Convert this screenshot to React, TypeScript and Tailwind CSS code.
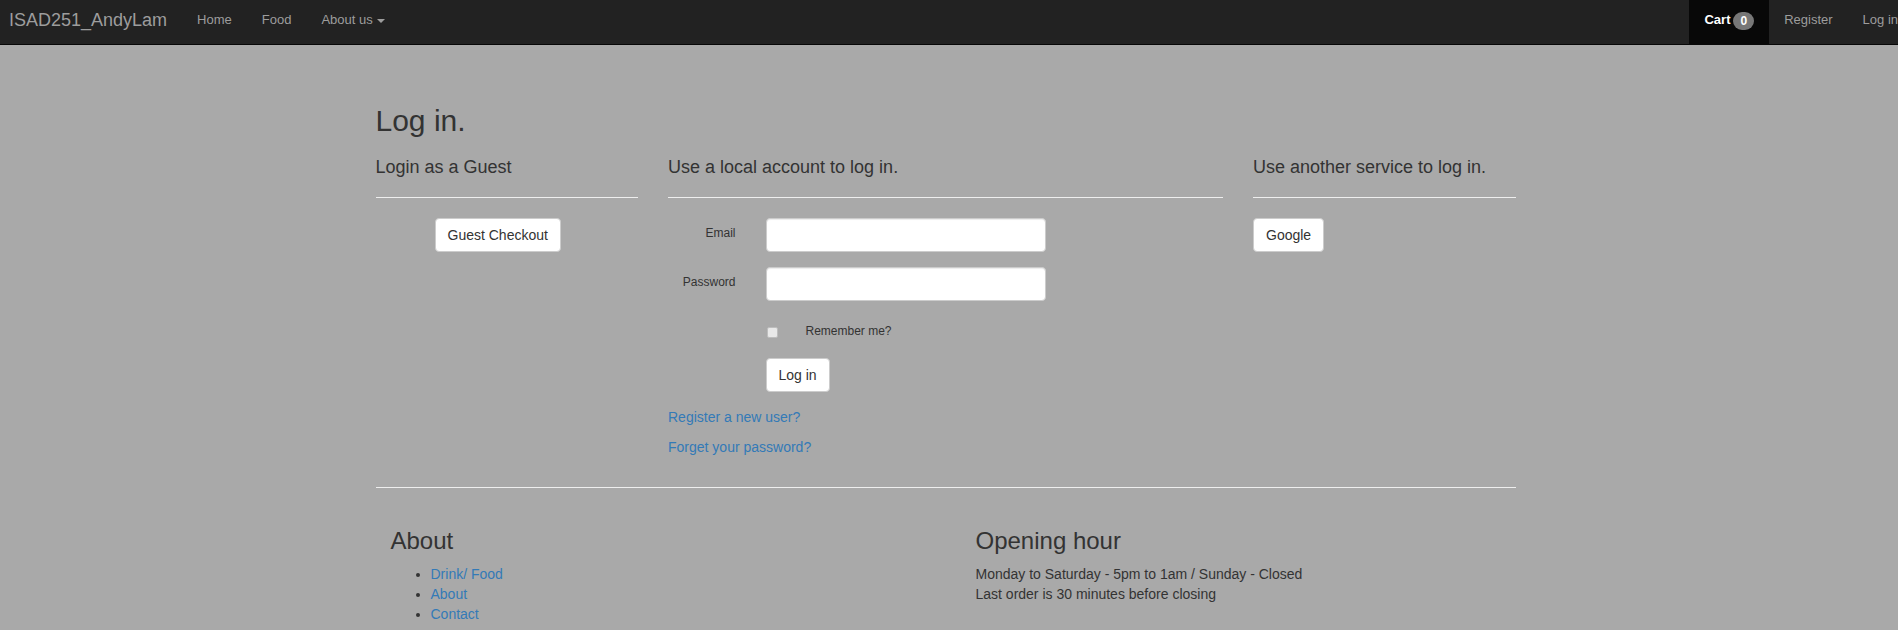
import React from 'react';

const navLinks = ['Home', 'Food'];
const aboutLinks = ['Drink/ Food', 'About', 'Contact'];

function Navbar() {
  return (
    <nav className="flex h-[45px] overflow-hidden border-b border-[#080808] bg-[#222]">
      <a className="pl-[9px] pr-[15px] pt-[10px] text-[18px] leading-[20px] text-[#9d9d9d]">ISAD251_AndyLam</a>
      <ul className="flex">
        {navLinks.map((l) => (
          <li key={l} className="px-[15px] pt-[10px] text-[13px] leading-[20px] text-[#9d9d9d]">
            {l}
          </li>
        ))}
        <li className="px-[15px] pt-[10px] text-[13px] leading-[20px] text-[#9d9d9d]">
          About us
          <span className="ml-[4px] inline-block h-0 w-0 border-x-[4px] border-t-[4px] border-x-transparent border-t-[#9d9d9d] align-middle" />
        </li>
      </ul>
      {/* navbar-right keeps bootstrap's -15px margin */}
      <ul className="-mr-[15px] ml-auto flex shrink-0">
        <li className="flex h-[44px] bg-[#080808] px-[15px] pt-[10px] text-[13px] leading-[20px] text-white">
          <span className="font-bold">Cart</span>
          <span className="ml-[3px] mt-[2px] h-[18px] rounded-[10px] bg-[#777] px-[7px] pt-[3px] text-[12px] font-bold leading-[12px] text-white">
            0
          </span>
        </li>
        <li className="px-[15px] pt-[10px] text-[13px] leading-[20px] text-[#9d9d9d]">Register</li>
        <li className="whitespace-nowrap px-[15px] pt-[10px] text-[13px] leading-[20px] text-[#9d9d9d]">Log in</li>
      </ul>
    </nav>
  );
}

function Button({ children }: { children: React.ReactNode }) {
  return (
    <button className="h-[34px] rounded-[4px] border border-[#ccc] bg-white px-[12px] text-[14px] leading-[20px] text-[#333]">
      {children}
    </button>
  );
}

function Input() {
  return (
    <div className="h-[34px] w-[280px] rounded-[4px] border border-[#ccc] bg-white shadow-[inset_0_1px_1px_rgba(0,0,0,0.075)]" />
  );
}

function SectionTitle({ children }: { children: React.ReactNode }) {
  return (
    <>
      <h4 className="mt-[10px] text-[18px] leading-[20px] text-[#333]">{children}</h4>
      <hr className="mb-[20px] mt-[20px] border-t border-[#eee]" />
    </>
  );
}

export default function App() {
  return (
    <div className="min-h-screen bg-[#a9a9a9] font-['Liberation_Sans',Arial,sans-serif] text-[14px] leading-[20px] text-[#333]">
      <Navbar />
      <div className="flex justify-center pr-[7px]">
        <div className="w-[1140px] pt-[59px]">
          <h2 className="mb-[10px] text-[30px] leading-[33px]">Log in.</h2>

          <div className="flex gap-[30px]">
            {/* Guest */}
            <section className="w-[262.5px] shrink-0">
              <SectionTitle>Login as a Guest</SectionTitle>
              <div className="pl-[59px]">
                <Button>Guest Checkout</Button>
              </div>
            </section>

            {/* Local account */}
            <section className="w-[555px] shrink-0">
              <SectionTitle>Use a local account to log in.</SectionTitle>
              <form className="grid grid-cols-[67.5px_1fr] gap-x-[30px]">
                <label className="pt-[7px] text-right text-[12px] leading-[17px]">Email</label>
                <div className="mb-[15px]">
                  <Input />
                </div>
                <label className="pt-[7px] text-right text-[12px] leading-[17px]">Password</label>
                <div className="mb-[15px]">
                  <Input />
                </div>
                <div />
                <div className="mb-[15px] flex h-[27px]">
                  <span className="ml-[1px] mt-[11px] h-[11px] w-[11px] rounded-[2px] border border-[#bdbdbd] bg-[#e8e8e8]" />
                  <span className="ml-[28px] pt-[7px] text-[12px] leading-[17px]">Remember me?</span>
                </div>
                <div />
                <div className="mb-[15px]">
                  <Button>Log in</Button>
                </div>
              </form>
              <p className="mb-[10px] text-[#337ab7]">Register a new user?</p>
              <p className="mb-[10px] text-[#337ab7]">Forget your password?</p>
            </section>

            {/* External */}
            <section className="w-[262.5px] shrink-0">
              <SectionTitle>Use another service to log in.</SectionTitle>
              <Button>Google</Button>
            </section>
          </div>

          <hr className="mb-[20px] mt-[20px] border-t border-[#eee]" />

          <footer className="flex">
            <div className="w-[585px] shrink-0 pl-[15px]">
              <h3 className="mb-[10px] mt-[20px] text-[24px] leading-[26.4px]">About</h3>
              <ul className="list-disc pl-[40px]">
                {aboutLinks.map((l) => (
                  <li key={l} className="text-[#337ab7] marker:text-[#333]">
                    {l}
                  </li>
                ))}
              </ul>
            </div>
            <div className="w-[585px] shrink-0 pl-[15px]">
              <h3 className="mb-[10px] mt-[20px] text-[24px] leading-[26.4px]">Opening hour</h3>
              <p>Monday to Saturday - 5pm to 1am / Sunday - Closed</p>
              <p>Last order is 30 minutes before closing</p>
            </div>
          </footer>
        </div>
      </div>
    </div>
  );
}
